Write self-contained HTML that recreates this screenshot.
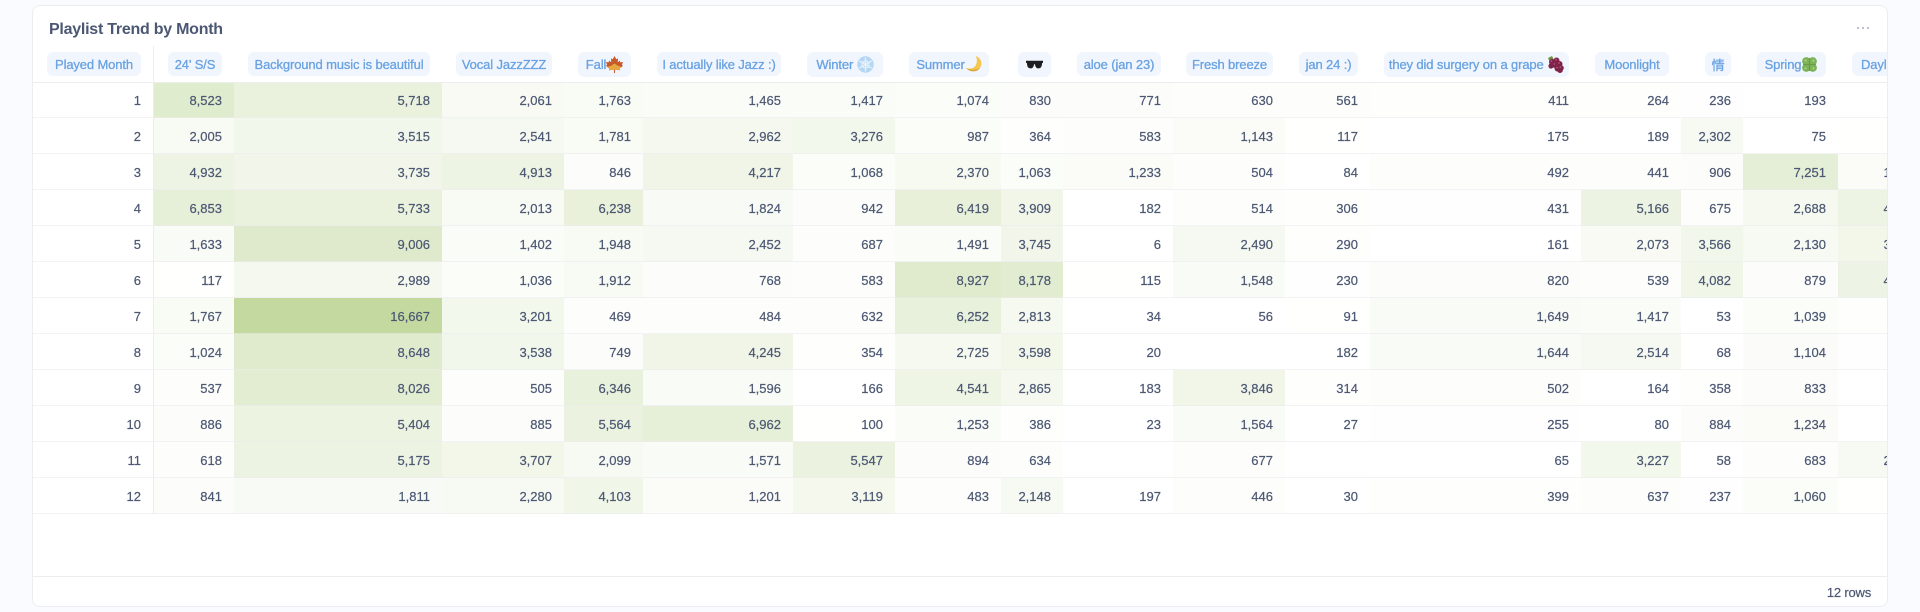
<!DOCTYPE html>
<html lang="en">
<head>
<meta charset="utf-8">
<title>Playlist Trend by Month</title>
<style>
html,body{margin:0;padding:0;width:1920px;height:612px;overflow:hidden;background:#f9fbfe;font-family:"Liberation Sans","Noto Sans CJK SC",sans-serif;color:#4c5773}
#card{position:absolute;left:32px;top:5px;width:1854px;height:600px;background:#fff;border:1px solid #ebedef;border-radius:8px;overflow:hidden}
#title{position:absolute;left:16px;top:14px;font-size:16px;line-height:20px;font-weight:700;letter-spacing:-.25px;white-space:nowrap}
.dot{position:absolute;top:21px;width:2.4px;height:2.4px;border-radius:50%;background:#a8adbf}
#wrap{position:absolute;left:0;top:40px;width:1854px;height:531px;overflow:hidden}
table{border-collapse:separate;border-spacing:0;table-layout:fixed;width:1895px}
th{height:36px;padding:6px 12px 0 0;box-sizing:border-box;text-align:right;vertical-align:top;font-weight:400}
td{--v:0;height:36px;padding:0 12px 0 0;box-sizing:border-box;text-align:right;vertical-align:middle;font-size:13px;-webkit-text-stroke:.2px #4c5773;white-space:nowrap;
background:rgb(calc(255 - 60*var(--v)/16667) calc(255 - 38*var(--v)/16667) calc(255 - 95*var(--v)/16667));
box-shadow:inset 0 -1px 0 rgba(235,235,240,.6)}
tbody tr:first-child td{box-shadow:inset 0 -1px 0 rgba(235,235,240,.6),inset 0 1px 0 #ebedef}
th:first-child{box-shadow:inset -1px 0 0 #ebedef}
td:first-child{padding-right:13px;box-shadow:inset 0 -1px 0 rgba(235,235,240,.6),inset -1px 0 0 #ebedef}
tbody tr:first-child td:first-child{box-shadow:inset 0 -1px 0 rgba(235,235,240,.6),inset 0 1px 0 #ebedef,inset -1px 0 0 #ebedef}
.p{display:inline-flex;align-items:center;justify-content:center;height:24px;box-sizing:border-box;border-radius:6px;background:#f1f6fe;color:#69a2e2;font-size:13px;font-weight:400;letter-spacing:-.13px;-webkit-text-stroke:.3px #69a2e2;white-space:nowrap;vertical-align:top}
.e{height:25px;padding-bottom:1px}
.p svg{flex:none;display:block}
#foot{position:absolute;left:0;top:570px;width:1854px;height:1px;background:#ebedef}
#rows{position:absolute;right:16px;top:578px;font-size:13px;line-height:18px;letter-spacing:-.2px;-webkit-text-stroke:.2px #4c5773;white-space:nowrap}
</style>
</head>
<body>
<div id="card">
<div id="title">Playlist Trend by Month</div>
<div class="dot" style="left:1824px"></div><div class="dot" style="left:1829px"></div><div class="dot" style="left:1834px"></div>
<div id="wrap">
<table>
<colgroup><col style="width:121px"><col style="width:80px"><col style="width:208px"><col style="width:122px"><col style="width:79px"><col style="width:150px"><col style="width:102px"><col style="width:106px"><col style="width:62px"><col style="width:110px"><col style="width:112px"><col style="width:85px"><col style="width:211px"><col style="width:100px"><col style="width:62px"><col style="width:95px"><col style="width:90px"></colgroup>
<thead><tr>
<th style="padding-right:13px"><span class="p" style="width:94px">Played Month</span></th>
<th><span class="p" style="width:54px">24' S/S</span></th>
<th><span class="p" style="width:182px">Background music is beautiful</span></th>
<th><span class="p" style="width:96px">Vocal JazzZZZ</span></th>
<th><span class="p e" style="width:53px">Fall<svg width="17" height="17" viewBox="0 0 16 16"><path d="M8 0 9.7 3 11.4 2.2 11 6 13 4.4 13.6 6 16 5.6 15 8.4 16 9.2 12.8 12 13.2 13.4 8.5 12.8 8.5 16 7.5 16 7.5 12.8 2.8 13.4 3.2 12 0 9.2 1 8.4 0 5.6 2.4 6 3 4.4 5 6 4.6 2.2 6.3 3Z" fill="#c65a2a"/><path d="M3.2 12 1.6 10.2 5 9 8 7 11 9 14.4 10.2 12.8 12 13.2 13.4 8.5 12.8 7.5 12.8 2.8 13.4Z" fill="#e6a640"/></svg></span></th>
<th><span class="p" style="width:124px">I actually like Jazz :)</span></th>
<th><span class="p e" style="width:76px">Winter&nbsp;<svg width="17" height="17" viewBox="0 0 17 17"><circle cx="8.5" cy="8.5" r="8.2" fill="#b5d6f2"/><path d="M8.5 1.5V15.5M2.4 5 14.6 12M2.4 12 14.6 5" stroke="#e6f2fb" stroke-width="1.3"/><circle cx="8.5" cy="8.5" r="3.5" fill="none" stroke="#e6f2fb" stroke-width="1"/></svg></span></th>
<th><span class="p e" style="width:80px">Summer<svg width="17" height="18" viewBox="0 0 17 17"><path d="M10.5 0.5C16 2 18 8 15 12.5 12 16.8 5 17 1 12.5 6 14 10 12.5 11.3 8.5 12.3 5.5 11.8 2.5 10.5 0.5Z" fill="#f3c650"/><path d="M1 12.5C5 17 12 16.8 15 12.5 11 15 6 15 1 12.5Z" fill="#d9a23a"/></svg></span></th>
<th><span class="p e" style="width:33px"><svg width="17" height="9" viewBox="0 0 17 9"><path d="M0 .8H17V2.6L16 3.4C16 6.8 14.6 8.4 12.4 8.4 10.2 8.4 9.2 6.4 9 4.2H8C7.8 6.4 6.8 8.4 4.6 8.4 2.4 8.4 1 6.8 1 3.4L0 2.6Z" fill="#1e1e20"/></svg></span></th>
<th><span class="p" style="width:84px">aloe (jan 23)</span></th>
<th><span class="p" style="width:87px">Fresh breeze</span></th>
<th><span class="p" style="width:59px">jan 24 :)</span></th>
<th><span class="p e" style="width:185px">they did surgery on a grape&nbsp;<svg width="17" height="17" viewBox="0 0 17 17"><path d="M1 2 5 0 7 4 2.5 5Z" fill="#6f8f3a"/><g fill="#7f2349"><circle cx="5" cy="6" r="3"/><circle cx="9.5" cy="4.5" r="3"/><circle cx="8" cy="9" r="3"/><circle cx="12.5" cy="8" r="3"/><circle cx="4" cy="10" r="2.6"/><circle cx="10.5" cy="12.5" r="3"/><circle cx="14" cy="12" r="2.8"/><circle cx="13" cy="14.2" r="2.8"/></g><g fill="#b05278"><circle cx="9" cy="3.6" r=".9"/><circle cx="7.4" cy="8" r=".9"/><circle cx="12" cy="7" r=".9"/><circle cx="10" cy="11.6" r=".9"/><circle cx="4.4" cy="5.2" r=".9"/><circle cx="13.4" cy="11.2" r=".9"/></g></svg></span></th>
<th><span class="p" style="width:74px">Moonlight</span></th>
<th><span class="p" style="width:26px">情</span></th>
<th><span class="p e" style="width:69px">Spring<svg width="17" height="17" viewBox="0 0 17 17"><g fill="#7db356"><circle cx="5.3" cy="5.3" r="4.2"/><circle cx="11.7" cy="5.3" r="4.2"/><circle cx="5.3" cy="11.7" r="4.2"/><circle cx="11.7" cy="11.7" r="4.2"/></g><path d="M8.5 2V15M2 8.5H15" stroke="#5f9640" stroke-width=".8"/><g fill="#a5cf85"><circle cx="4.6" cy="4.6" r="1.1"/><circle cx="12.4" cy="4.6" r="1.1"/><circle cx="4.6" cy="12.4" r="1.1"/><circle cx="12.4" cy="12.4" r="1.1"/></g></svg></span></th>
<th><span class="p" style="width:64px">Daylight</span></th>
</tr></thead>
<tbody>
<tr><td>1</td><td style="--v:8523">8,523</td><td style="--v:5718">5,718</td><td style="--v:2061">2,061</td><td style="--v:1763">1,763</td><td style="--v:1465">1,465</td><td style="--v:1417">1,417</td><td style="--v:1074">1,074</td><td style="--v:830">830</td><td style="--v:771">771</td><td style="--v:630">630</td><td style="--v:561">561</td><td style="--v:411">411</td><td style="--v:264">264</td><td style="--v:236">236</td><td style="--v:193">193</td><td style="--v:152">152</td></tr>
<tr><td>2</td><td style="--v:2005">2,005</td><td style="--v:3515">3,515</td><td style="--v:2541">2,541</td><td style="--v:1781">1,781</td><td style="--v:2962">2,962</td><td style="--v:3276">3,276</td><td style="--v:987">987</td><td style="--v:364">364</td><td style="--v:583">583</td><td style="--v:1143">1,143</td><td style="--v:117">117</td><td style="--v:175">175</td><td style="--v:189">189</td><td style="--v:2302">2,302</td><td style="--v:75">75</td><td style="--v:96">96</td></tr>
<tr><td>3</td><td style="--v:4932">4,932</td><td style="--v:3735">3,735</td><td style="--v:4913">4,913</td><td style="--v:846">846</td><td style="--v:4217">4,217</td><td style="--v:1068">1,068</td><td style="--v:2370">2,370</td><td style="--v:1063">1,063</td><td style="--v:1233">1,233</td><td style="--v:504">504</td><td style="--v:84">84</td><td style="--v:492">492</td><td style="--v:441">441</td><td style="--v:906">906</td><td style="--v:7251">7,251</td><td style="--v:1204">1,204</td></tr>
<tr><td>4</td><td style="--v:6853">6,853</td><td style="--v:5733">5,733</td><td style="--v:2013">2,013</td><td style="--v:6238">6,238</td><td style="--v:1824">1,824</td><td style="--v:942">942</td><td style="--v:6419">6,419</td><td style="--v:3909">3,909</td><td style="--v:182">182</td><td style="--v:514">514</td><td style="--v:306">306</td><td style="--v:431">431</td><td style="--v:5166">5,166</td><td style="--v:675">675</td><td style="--v:2688">2,688</td><td style="--v:4820">4,820</td></tr>
<tr><td>5</td><td style="--v:1633">1,633</td><td style="--v:9006">9,006</td><td style="--v:1402">1,402</td><td style="--v:1948">1,948</td><td style="--v:2452">2,452</td><td style="--v:687">687</td><td style="--v:1491">1,491</td><td style="--v:3745">3,745</td><td style="--v:6">6</td><td style="--v:2490">2,490</td><td style="--v:290">290</td><td style="--v:161">161</td><td style="--v:2073">2,073</td><td style="--v:3566">3,566</td><td style="--v:2130">2,130</td><td style="--v:3710">3,710</td></tr>
<tr><td>6</td><td style="--v:117">117</td><td style="--v:2989">2,989</td><td style="--v:1036">1,036</td><td style="--v:1912">1,912</td><td style="--v:768">768</td><td style="--v:583">583</td><td style="--v:8927">8,927</td><td style="--v:8178">8,178</td><td style="--v:115">115</td><td style="--v:1548">1,548</td><td style="--v:230">230</td><td style="--v:820">820</td><td style="--v:539">539</td><td style="--v:4082">4,082</td><td style="--v:879">879</td><td style="--v:4630">4,630</td></tr>
<tr><td>7</td><td style="--v:1767">1,767</td><td style="--v:16667">16,667</td><td style="--v:3201">3,201</td><td style="--v:469">469</td><td style="--v:484">484</td><td style="--v:632">632</td><td style="--v:6252">6,252</td><td style="--v:2813">2,813</td><td style="--v:34">34</td><td style="--v:56">56</td><td style="--v:91">91</td><td style="--v:1649">1,649</td><td style="--v:1417">1,417</td><td style="--v:53">53</td><td style="--v:1039">1,039</td><td style="--v:310">310</td></tr>
<tr><td>8</td><td style="--v:1024">1,024</td><td style="--v:8648">8,648</td><td style="--v:3538">3,538</td><td style="--v:749">749</td><td style="--v:4245">4,245</td><td style="--v:354">354</td><td style="--v:2725">2,725</td><td style="--v:3598">3,598</td><td style="--v:20">20</td><td></td><td style="--v:182">182</td><td style="--v:1644">1,644</td><td style="--v:2514">2,514</td><td style="--v:68">68</td><td style="--v:1104">1,104</td><td style="--v:420">420</td></tr>
<tr><td>9</td><td style="--v:537">537</td><td style="--v:8026">8,026</td><td style="--v:505">505</td><td style="--v:6346">6,346</td><td style="--v:1596">1,596</td><td style="--v:166">166</td><td style="--v:4541">4,541</td><td style="--v:2865">2,865</td><td style="--v:183">183</td><td style="--v:3846">3,846</td><td style="--v:314">314</td><td style="--v:502">502</td><td style="--v:164">164</td><td style="--v:358">358</td><td style="--v:833">833</td><td style="--v:180">180</td></tr>
<tr><td>10</td><td style="--v:886">886</td><td style="--v:5404">5,404</td><td style="--v:885">885</td><td style="--v:5564">5,564</td><td style="--v:6962">6,962</td><td style="--v:100">100</td><td style="--v:1253">1,253</td><td style="--v:386">386</td><td style="--v:23">23</td><td style="--v:1564">1,564</td><td style="--v:27">27</td><td style="--v:255">255</td><td style="--v:80">80</td><td style="--v:884">884</td><td style="--v:1234">1,234</td><td style="--v:140">140</td></tr>
<tr><td>11</td><td style="--v:618">618</td><td style="--v:5175">5,175</td><td style="--v:3707">3,707</td><td style="--v:2099">2,099</td><td style="--v:1571">1,571</td><td style="--v:5547">5,547</td><td style="--v:894">894</td><td style="--v:634">634</td><td></td><td style="--v:677">677</td><td></td><td style="--v:65">65</td><td style="--v:3227">3,227</td><td style="--v:58">58</td><td style="--v:683">683</td><td style="--v:2210">2,210</td></tr>
<tr><td>12</td><td style="--v:841">841</td><td style="--v:1811">1,811</td><td style="--v:2280">2,280</td><td style="--v:4103">4,103</td><td style="--v:1201">1,201</td><td style="--v:3119">3,119</td><td style="--v:483">483</td><td style="--v:2148">2,148</td><td style="--v:197">197</td><td style="--v:446">446</td><td style="--v:30">30</td><td style="--v:399">399</td><td style="--v:637">637</td><td style="--v:237">237</td><td style="--v:1060">1,060</td><td style="--v:120">120</td></tr>
</tbody>
</table>
</div>
<div id="foot"></div>
<div id="rows">12 rows</div>
</div>
</body>
</html>
